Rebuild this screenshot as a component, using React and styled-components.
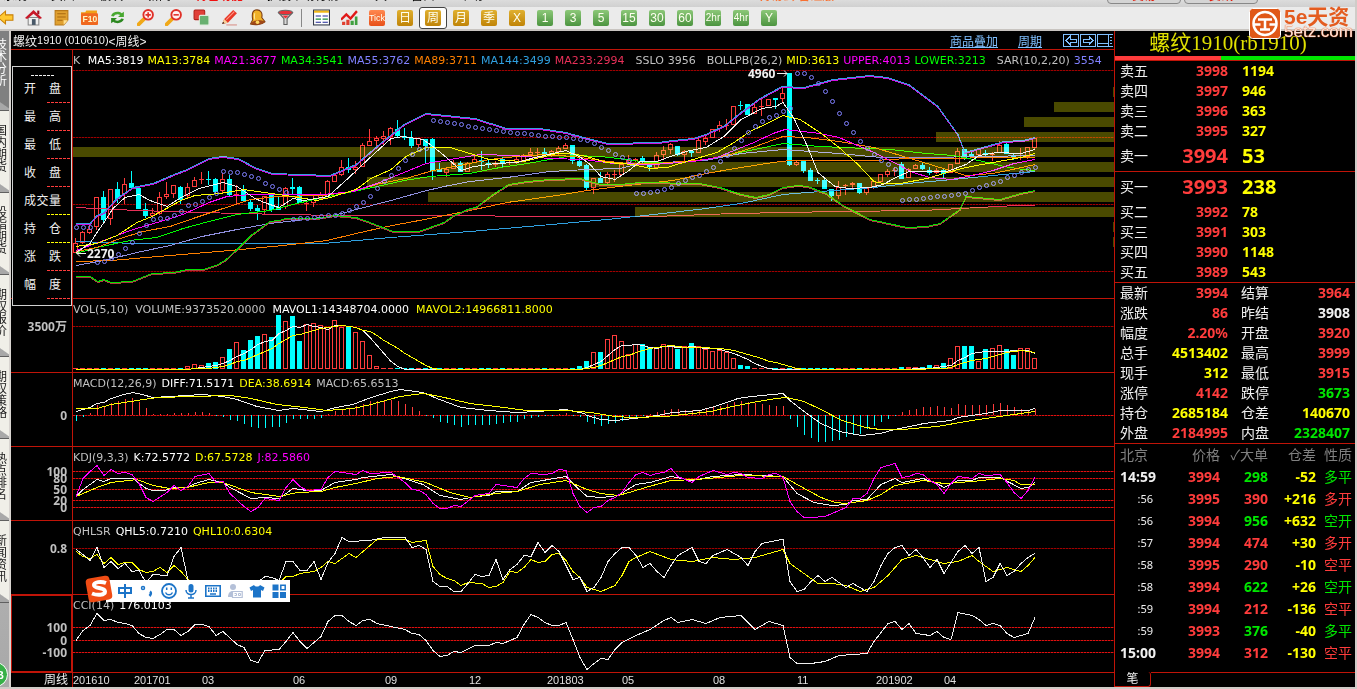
import React from 'react';
import styled, { createGlobalStyle, css } from 'styled-components';

const RED = '#ff3c3c';
const CYAN = '#00ffff';
const YELLOW = '#ffff00';
const GREEN = '#00e600';
const WHITE = '#f0f0f0';
const SILVER = '#c0c0c0';
const LINE = '#c01408';
const VIOLET = '#8080ff';
const MAGENTA = '#ff00ff';
const ORANGE = '#ff8000';
const SKY = '#30a0e0';
const ROSE = '#e83058';

const Global = createGlobalStyle`
  * { box-sizing: border-box; }
  body { margin: 0; background: #000; }
  button { font: inherit; border: 0; padding: 0; background: none; color: inherit; }
`;

/* ---------- page frame ---------- */

const Page = styled.div`
  position: relative;
  min-height: 100vh;
  overflow: hidden;
  background: #000;
  color: ${WHITE};
  font: 12px 'Liberation Sans', 'Noto Sans CJK SC', sans-serif;
  border-right: 2px solid #d0ccc8;
  border-bottom: 2px solid #d0ccc8;
`;

const MenuStrip = styled.nav`
  display: flex;
  justify-content: space-between;
  height: 7px;
  overflow: hidden;
  background: linear-gradient(#dcdcdc, #d0d0d0);
`;

const MenuGroup = styled.div`
  display: flex;
  gap: 24px;
  height: 14px;
  margin: -11px 0 0 3px;
  line-height: 14px;
  white-space: nowrap;
`;

const MenuItem = styled.a`
  color: ${(p) => p.$color || '#000'};
  font-weight: ${(p) => (p.$color ? 700 : 400)};
  text-decoration: none;
`;

const PillGroup = styled.div`
  display: flex;
  gap: 3px;
  margin: -14px 97px 0 0;
`;

const Pill = styled.button`
  width: 74px;
  height: 18px;
  border: 1px solid #888;
  border-radius: 4px;
  background: #d4d4d4;
  color: #e02010;
  font-weight: 700;
  line-height: 18px;
`;

const Toolbar = styled.div`
  display: flex;
  align-items: center;
  height: 24px;
  padding-bottom: 1px;
  background: #ebebeb;
  border-bottom: 2px solid #c8c4c0;
  overflow: hidden;
`;

const ToolRow = styled.div`
  display: flex;
  margin-left: -9px;
`;

const Tool = styled.button`
  flex: none;
  display: flex;
  align-items: center;
  justify-content: center;
  width: 28px;
  height: 22px;
  ${(p) =>
    p.$on &&
    css`
      background: #fff;
      border: 1px solid #444;
      border-radius: 3px;
    `}
`;

const Separator = styled.span`
  width: 1px;
  height: 18px;
  margin: 2px 5px 2px 2px;
  background: #888;
`;

const tileColors = {
  gold: 'linear-gradient(#e0b030, #c08408)',
  green: 'linear-gradient(#8cc878, #4c9440)',
  orange: 'linear-gradient(#ff8850, #e85018)',
};

const Tile = styled.span`
  display: flex;
  align-items: center;
  justify-content: center;
  width: 16px;
  height: 16px;
  border-radius: 2px;
  background: ${(p) => tileColors[p.$tone]};
  color: #fffff0;
  font-family: ${(p) => (p.$size ? "'Liberation Sans Narrow', " : '')}'Liberation Sans', 'Noto Sans CJK SC', sans-serif;
  font-size: ${(p) => p.$size || 12}px;
  line-height: 16px;
`;

const Brand = styled.a`
  position: absolute;
  top: 8px;
  right: 0;
  display: flex;
  width: 106px;
  height: 32px;
  gap: 3px;
  color: #e45c20;
  text-decoration: none;
  z-index: 3;
`;

const BrandText = styled.span`
  display: flex;
  flex-direction: column;
  white-space: nowrap;
`;

const BrandName = styled.strong`
  font-size: 21px;
  line-height: 17px;
`;

const BrandUrl = styled.span`
  color: #f8e4dc;
  font-size: 17px;
  line-height: 14px;
  text-shadow: 0 0 1px #e45c20, 0 0 1px #e45c20;
`;

const Body = styled.div`
  display: flex;
`;

/* ---------- left rail ---------- */

const Rail = styled.nav`
  flex: none;
  display: flex;
  flex-direction: column;
  width: 11px;
  overflow: hidden;
  background: linear-gradient(#d8d8d8, #a8a8a8);
  border-right: 2px solid #d8d4d0;
`;

const RailTab = styled.a`
  display: flex;
  justify-content: flex-end;
  flex: none;
  width: 9px;
  height: ${(p) => (p.$on ? 80 : 82)}px;
  padding: ${(p) => (p.$on ? 8 : 14)}px 2px 0 0;
  background: linear-gradient(35deg, #a8a8a8 6px, ${(p) => (p.$on ? '#808080' : '#f0efe8')} 7px);
  border-bottom: 1px solid #606060;
  color: ${(p) => (p.$on ? '#fff' : '#202020')};
  line-height: 12px;
  text-decoration: none;
`;

const RailText = styled.span`
  flex: none;
  width: 12px;
  overflow-wrap: anywhere;
`;

const RailBadge = styled.span`
  display: flex;
  align-items: center;
  justify-content: flex-end;
  width: 25px;
  height: 25px;
  margin: auto 0 0 -17px;
  padding-right: 3px;
  border-radius: 50%;
  background: #38b048;
  border: 1px solid #fff;
  color: #fff;
  font-weight: 700;
  font-size: 11px;
`;

/* ---------- chart column ---------- */

const Charts = styled.main`
  position: relative;
  flex: 1;
  min-width: 0;
`;

const ChartTitle = styled.header`
  display: flex;
  align-items: center;
  height: 19px;
  padding-left: 2px;
  border-bottom: 1px solid ${LINE};
  font-size: 12px;
`;

const Digits = styled.span`
  font-size: 11px;
`;

const TitleLinks = styled.div`
  display: flex;
  align-items: center;
  gap: 20px;
  margin-left: auto;
`;

const TitleLink = styled.a`
  color: #80c0ff;
  text-decoration: underline;
`;

const PaneRow = styled.section`
  display: flex;
`;

const AxisCell = styled.div`
  flex: none;
  width: 62px;
  border-right: 1px solid ${LINE};
  border-bottom: 1px solid ${LINE};
  ${(p) => p.$focus && css`box-shadow: inset 0 0 0 1px ${LINE};`}
`;

const Pane = styled.div`
  flex: 1;
  min-width: 0;
  display: grid;
  overflow: hidden;
  border-bottom: 1px solid ${LINE};
  > * { grid-area: 1 / 1; }
`;

const Drawing = styled.svg`
  display: block;
  width: 100%;
  height: ${(p) => p.$h}px;
  font: 700 12px 'Noto Sans', 'Noto Sans CJK SC', sans-serif;
`;

const Legend = styled.div`
  display: flex;
  align-items: center;
  gap: ${(p) => p.$gap || 5}px;
  height: 20px;
  font: 11px 'DejaVu Sans', sans-serif;
  white-space: pre;
  z-index: 1;
`;

const Key = styled.span`
  color: ${(p) => p.$color};
`;

const DateRow = styled.footer`
  display: flex;
  height: 14px;
`;

const PeriodName = styled.div`
  flex: none;
  width: 62px;
  padding-right: 4px;
  border-right: 1px solid ${LINE};
  text-align: right;
  line-height: 14px;
`;

/* ---------- floating quote box ---------- */

const QuoteBox = styled.div`
  position: absolute;
  top: 35px;
  left: 1px;
  width: 60px;
  height: 240px;
  border: 1px solid #d0d0d0;
  background: #000;
  text-align: center;
  line-height: 14px;
`;

const Dashes = styled.div`
  width: 23px;
  height: 1px;
  margin: ${(p) => (p.$lead ? '8px auto 6px' : '6px 1px 7px auto')};
  background: repeating-linear-gradient(90deg, ${(p) => p.$color} 0 3px, transparent 3px 4px);
`;

const QuoteName = styled.div`
  display: flex;
  justify-content: space-between;
  height: 14px;
  padding: 0 10px 0 11px;
`;

/* ---------- right panel ---------- */

const Side = styled.aside`
  flex: none;
  display: flex;
  flex-direction: column;
  width: 241px;
  border-left: 1px solid ${LINE};
`;

const Contract = styled.h1`
  display: flex;
  align-items: center;
  justify-content: center;
  height: 25px;
  margin: 0;
  padding-right: 14px;
  color: #e0e000;
  font: 400 21px/25px 'Liberation Serif', 'Noto Sans CJK SC', serif;
`;

const Ratio = styled.div`
  display: flex;
  height: 5px;
  border-bottom: 1px solid ${LINE};
`;

const RatioPart = styled.span`
  flex: ${(p) => p.$part};
  background: ${(p) => p.$color};
`;

const Table = styled.table`
  width: 100%;
  table-layout: fixed;
  border-spacing: 0;
  ${(p) => p.$ruled && css`border-bottom: 1px solid ${LINE};`}
`;

const Row = styled.tr`
  height: ${(p) => p.$h || 20}px;
`;

const Cell = styled.td`
  width: ${(p) => (p.$w ? p.$w + 'px' : 'auto')};
  padding: 0 ${(p) => p.$pr || 0}px 0 ${(p) => p.$pl || 0}px;
  color: ${(p) => p.$color || WHITE};
  text-align: ${(p) => p.$align || 'left'};
  font: ${(p) => (p.$num ? 700 : 400)} ${(p) => p.$size || 14}px/18px 'Noto Sans', 'Noto Sans CJK SC', sans-serif;
  white-space: nowrap;
`;

const SideTabs = styled.div`
  display: flex;
  margin-top: 8px;
`;

const SideTab = styled.button`
  width: 36px;
  height: 15px;
  border-right: 1px solid ${LINE};
  border-bottom: 1px solid ${LINE};
  border-radius: 0 3px 3px 0;
  line-height: 14px;
`;

const SideRule = styled.span`
  flex: 1;
  border-top: 1px solid ${LINE};
`;

/* ---------- input method bar ---------- */

const ImeBar = styled.div`
  position: absolute;
  left: 85px;
  top: 575px;
  display: flex;
  align-items: center;
  z-index: 3;
`;

const ImeLogo = styled.svg`
  position: relative;
  z-index: 1;
`;

const ImeTools = styled.div`
  display: flex;
  align-items: center;
  gap: 4px;
  height: 22px;
  margin: 4px 0 0 -8px;
  padding: 0 2px 0 10px;
  background: #fff;
  color: #1c74c8;
`;

const ImeTool = styled.button`
  display: flex;
  align-items: center;
  justify-content: center;
  width: 18px;
  height: 18px;
`;

/* ---------- chart data ---------- */

const parse = (s) => s.trim().split(/\s+/).map((p) => p.split(',').map(Number));
const xOf = (bar) => 3 + Math.round(bar * 7);

const valueAt = (pts, i) => {
  for (let k = 1; k < pts.length; k++) {
    const [x0, y0] = pts[k - 1];
    const [x1, y1] = pts[k];
    if (i <= x1) return y0 + ((y1 - y0) * (i - x0)) / (x1 - x0);
  }
  return pts[pts.length - 1][1];
};

const MA5 = parse('0,202 2,193 3,182 4,172 5.3,158 7,147 9,144 10.5,150 13,156 15,147 17.5,138 21,132 23,136 25.5,148 27.3,153 29,157 31,148 32.5,150 36,146 39,127 41.7,109 45,88 46.7,86 49.6,89 51,96 52.5,105 55,120 56.8,116 60,113 63,112 65.6,107 70,100 72.2,107 73.4,114 75,126 77,129 79,120 80.6,111 83,111 85.3,105 87.7,100 90,97 92.5,86 95,69 98,58 100,56 101,52 102.6,68 104.4,95 106,122 108.4,136 110.6,138 113.4,137 115.3,134 117.2,127 119,121 124.4,121 127.2,114 129,105 131.5,102 135,103 137,99');
const MA13 = parse('0,196 3,193 5.8,185 8.7,172 10.8,166 15,150 17,145 20.6,143 24,139 26.8,142 30,145 34.4,150 36.3,147 40,139 42.2,128 45,119 47.2,106 50,97 53.4,97 56.3,103 59,109 64,111 68.7,103 71,103 73.4,107 75.8,112 79.6,114 82,118 84.4,117 88.2,109 91.5,102 94,92 96.3,81 98.7,73 101,65 103.4,69 106.3,82 109,97 111.5,113 114,131 115.3,133 117.7,133 121.5,128 124.4,122 127.2,117 131,112 135,107 137,103');
const MA21 = parse('0,200 4,190 7.7,180 11.5,172 15.3,164 19,152 21.5,146 25,144 35.3,144 39.6,141 43,133 46.8,122 50,113 53.4,109 57.7,104 62.5,105 67.7,108 72.5,109 76.8,113 82.5,114 88.2,111 91.5,107 94,100 96.8,92 99.6,83 101.3,79 106.3,83 109,87 114,102 116.8,112 119.6,122 122,127 125,129 128.2,125 131,120 134,113 137,109');
const MA34 = parse('0,203 3,197 7.7,190 11.5,187 15.3,178 19,171 23,164 27.7,160 31.5,153 35.3,147 39,142 43,136 46.8,130 50.6,126 56.3,123 60.6,117 64.4,113 67.7,109 71,105 75,106 78.7,109 81.5,112 85.3,112 90,109 94,103 97.7,98 101,93 106.3,96 116.3,99 121.5,103 125.3,105 129,110 132.5,116 135.3,119 137,120');
const MID = parse('0,201 3,197 6.3,188 9.6,181 13.4,176 17.2,167 20.6,159 25,149 28.7,146 35.3,145 39.6,141 43.4,133 47.2,128 51,120 56.3,113 59,109 63,106 67,104 71,106 75,110 78.7,113 83,113 90,109 93.4,104 96.3,98 99,91 101,86 104.4,87 109,91 114,97 118.7,107 121.5,113 125.3,121 127.2,125 131,123 134.4,118 137,114');
const MA89 = parse('0,211 5,210 13.4,205 22,200 29.6,195 35.8,190 40,183 44.4,176 50.6,168 56.3,160 61.5,152 68.7,145 73,140 78.7,135 85.3,130 90,123 95,117 99.6,112 102,110 114,110 118.7,108 137,107');
const MA55 = parse('0,215 4,210 8.7,202 13.4,195 18,186 23,179 27.7,173 32.5,169 36.3,166 40,159 45,150 49.6,141 52.5,136 56.3,131 61.5,127 67.7,121 73,119 77.7,118 80.6,113 90,110 95,103 101,99 109,103 115,107 121.5,107 137,105');
const MA144 = parse('0,191 8.7,193 35.3,193 45,187 56.3,181 66.3,175 75.8,169 82.5,164 90,158 95,153 101,144 106.3,141 114,137 118.7,133 125.3,129 131,125 137,121');
const MA233 = parse('0,157 8.7,160 23,163 37,165 82.5,166 94,163 109,161 121,160 129,157 134.4,155 137,155');
const UPPER = parse('0,173 2,173 3,165 4,162 5.8,148 8.2,137 11,133 14,124 15.8,119 19,108 21,106 23.2,108 25.8,118 28.2,123 36.3,125 40,114 43,96 46.8,74 50,63 57,68 61.5,78 66.3,78 70,82 72.5,87 76,93 83.2,92 85.3,90 88.2,88 90,84 92.7,75 95,62 97.7,48 100.8,36 104,37 108.2,29 113.4,25 115.8,27 119,34 123.2,56 126,84 127,102 129,98 132.5,91 135.3,90 137,87');
const LOWER = parse('0,226 2,226 3.2,231 4,229 5,232 8,231 10.8,223 14,222 15.8,219 18.2,219 20,215 21.3,210 23,199 25,185 27.7,171 29,170 30,168 34.4,168 37,165 40,167 42,172 45.3,181 49,181 52.5,172 54,165 56.3,158 57.2,157 59.6,144 61.8,134 64.4,131 67.7,129 72,128 75,134 77.7,134 80.6,132 89,133 92,137 95,144 97.2,147 99,144 101,137 103.2,135 104.6,136 107.2,143 109.6,155 113.4,169 118.7,177 121.5,176 123.4,173 126.3,159 127.2,146 132,149 135,143 137,140');

const SAR = [177, 177, 177, 212, 211, 208, 204, 198, 192, 183, 175, 169, 168, 168, 165, 161, 155, 154, 151, 147, 143, 121, 122, 122, 124, 126, 128, 133, 136, 139, 142, 169, 168, 168, 167, 166, 165, 165, 163, 160, 156, 152, 146, 138, 131, 125, 118, 110, 104, 99, 98, 70, 71, 72, 73, 74, 76, 77, 78, 79, 80, 81, 82, 83, 83, 84, 85, 86, 86, 87, 87, 88, 89, 90, 93, 97, 100, 104, 107, 110, 143, 143, 142, 141, 139, 137, 133, 130, 127, 125, 121, 117, 111, 105, 98, 90, 82, 76, 71, 67, 65, 61, 58, 23, 23, 27, 33, 41, 51, 63, 73, 82, 91, 98, 104, 110, 114, 119, 150, 149, 149, 148, 147, 146, 146, 145, 144, 143, 140, 137, 135, 133, 131, 127, 125, 122, 119, 117];

/* one entry per week: direction, then high, body top, body bottom, low */
const CANDLES = `
u188,193,203,203 u181,182,193,194 u175,179,183,184 u147,147,177,180 d141,147,170,172 u139,139,169,175 d132,139,149,153 u128,134,144,154 d121,133,138,139 d138,138,159,159
d153,159,166,168 u158,163,166,168 u142,147,164,165 u132,144,147,149 u135,135,144,148 d136,137,150,154 u133,137,146,149 u127,130,137,137 u122,129,130,134 d121,129,130,135
d128,129,142,143 u123,129,141,143 d125,129,145,147 u135,144,146,154 d135,140,151,152 d150,152,159,161 d155,158,161,170 u146,146,160,164 d143,143,160,162 d147,157,160,160
u137,138,157,159 d128,137,139,144 d136,137,153,153 u151,153,154,161 u146,149,153,157 u142,145,149,149 u130,131,147,147 u123,125,132,132 u110,117,125,126 d108,117,120,123
u111,117,120,124 u93,95,117,117 u79,91,96,96 u86,88,91,98 u81,86,89,96 u77,78,87,95 d70,79,86,88 d78,86,88,90 d81,88,96,98 u88,88,95,97
d89,89,96,113 d88,89,121,130 d113,119,122,122 u118,119,123,127 u110,113,119,119 d111,113,122,122 u112,113,122,122 u106,109,113,113 d101,110,112,120 d110,113,115,118
u111,113,115,117 d107,109,114,117 u110,112,113,115 u107,109,112,114 u104,105,112,112 u98,102,105,106 u98,102,103,106 d98,102,104,105 u100,101,104,107 u96,98,102,106
u93,95,99,99 d95,95,111,114 d108,111,116,117 d114,115,138,140 u128,128,138,144 d122,128,133,133 u122,124,133,134 u120,124,125,132 u114,114,125,125 u105,110,113,113
u108,109,111,112 d106,108,111,115 d111,112,117,121 u102,105,118,118 u96,100,105,109 u93,94,100,104 d96,96,105,106 u100,101,105,111 d100,101,103,107 u88,90,103,103
u86,88,92,95 u79,79,88,88 u71,75,79,82 u69,75,76,80 u56,56,75,75 d51,55,56,60 d54,54,65,65 u54,57,64,64 u47,56,57,66 u49,49,56,56
d48,48,50,59 u37,43,49,52 d23,23,115,116 u110,112,115,116 d111,111,121,123 d118,120,131,131 d128,130,131,134 d127,130,139,139 d139,139,146,151 u131,137,146,149
u134,135,136,145 u132,133,135,140 d133,133,143,144 u137,138,143,145 u130,131,138,139 u124,124,132,132 u119,121,125,127 u117,120,121,126 d112,114,129,129 u118,119,128,128
u114,115,119,119 d112,115,119,120 d117,120,123,125 u118,120,123,124 d119,120,124,128 u114,114,123,123 u98,101,114,114 d99,99,109,110 d101,104,106,107 u98,99,105,107
d100,103,105,107 u102,104,105,111 u91,95,103,103 d92,94,104,104 d104,105,107,110 u98,107,108,110 u97,97,107,109 u87,88,98,99`
  .trim()
  .split(/\s+/)
  .map((s) => ({ up: s[0] === 'u', v: s.slice(1).split(',').map(Number) }));

const VOLUME = [
  ...Array(16).fill(1), 3, 5, 4, 6, 7, 12, 20, 27, 19, 29, 33, 35, 32, 54, 48, 53, 28, 45, 46, 44, 42, 49, 42, 43, 37, 28, 14, 3,
  ...Array(28).fill(1), 3, 8, 17, 17, 30, 34, 28, 15, 25, 25, 22, 22, 25, 24, 20, 23, 26, 23, 20, 18, 19, 17, 11, 4, 3,
  ...Array(21).fill(1), 2, 2, 2, 2, 4, 4, 6, 11, 23, 23, 23, 8, 20, 21, 24, 20, 14, 21, 21, 11,
];

const average = (n) =>
  VOLUME.map((_, i) => {
    const part = VOLUME.slice(Math.max(0, i - n + 1), i + 1);
    return [i, 71 - part.reduce((a, b) => a + b, 0) / part.length];
  });

const DIFF = parse('0,38 2,34 3,30 4,29 5,25 6.8,21 8.2,19 9.4,21 11,24 18.2,21 21,23 23,26 25.8,33 29,37 31,35 35,38 37.2,34 39.6,31 42.2,24 45,18 46.3,16 49.6,19 51.5,25 55,34 59,37 63,39 65.8,38 70,36 72.5,40 73,42 75,46 77,47 81,44 83,42 85.3,39 89.2,37 91.7,32 94.6,25 96.6,23 101,20 102,27 104,38 106.4,50 109,58 112.3,62 114.8,60 117,56 121.2,50 125,47 126,44 130,40 132,37 136,37 137,35');
const DEA = parse('0,35 3,35 5,31 8.7,27 11.5,24 22,22 25,25 28.7,31 32.5,34 35.8,37 39.6,35 42.2,31 46.3,23 49.6,20 52,23 56.3,30 60,33 64.4,37 70,37 73.5,39 77,43 79.4,44 84.3,43 86.8,41 90.7,38 93.2,34 96.6,29 100,25 101.5,24 104,28 106.4,36 109.4,47 112.8,54 114.8,56 118,56 123,53 128,47 131,44 134,41 137,38');
const K_LINE = parse('0,49 1,42 3,32 4,34 5,31 8.2,31 10,41 11,43 12.5,43 14,40 15.8,40 17,36 19,32 21,35 22,40 25,51 27,50 29,51 31,41 33,43 35,43 37,35 40,32 41,30 45,27 46.8,31 49.6,37 52,48 55,52 57,49 59,48 60,44 63,44 65,35 70,29 71.5,40 73,49 75.2,50 77.4,48 80,37 82,35 85,29 88,33 91,29 95,27 101,29 103,46 105.4,55 108,58 110,57 111,53 113,52 115,37 117,31 118,35 121,31 123,36 124,40 126,33 128,33 129,30 132,30 135,41 136,40 137,35');
const D_LINE = parse('0,49 3,40 5,35 8.7,32 11,38 13.4,41 15.8,40 19,35 21,35 25,45 29,49 31.5,45 35,44 37,40 40,36 43,31 46,29 50,35 53.4,45 56.3,50 60,46 63,44 66.3,37 70,33 73,42 75,46 77.4,48 79,45 81.8,39 85,33 88.7,32 91.7,30 95,28 101,29 103,37 106.4,50 108.4,55 110,56 113,53 115,47 117,38 121,33 124,36 128,34 132,31 134,33 135,37 137,37');
const J_LINE = parse('0,49 1,31 2,24 3,18 4,28 5,22 6,26 7,25 8,27 9,36 10,50 11,54 13,45 14,38 15,43 16,39 17,29 19,26 20,35 21,34 22,46 24,59 25,64 26,60 27,51 29,53 30,40 31,32 32,39 33,43 35,42 36,30 37,24 40,27 41,23 42,26 45,25 47,35 48,42 49,43 50,47 51,56 52,61 53,61 54,58 55,59 57,48 59,46 60,37 63,40 64,31 65,26 67,27 68,26 69,22 70,23 71,46 72,59 73,65 74,60 75,59 76,53 77,50 78,45 79,35 80,27 81,25 82,28 83,26 84,25 85,21 86,29 87,32 88,35 89,29 91,23 93,27 94,25 95,26 96,30 98,31 99,27 100,26 101,30 102,54 103,64 104,70 105,70 107,69 108,66 110,60 111,51 112,51 113,46 114,31 115,20 117,16 118,30 119,29 120,26 121,27 122,33 123,37 124,46 125,36 126,29 128,31 129,26 130,28 132,27 133,35 134,45 135,51 136,43 137,30');
const QHL5 = parse('0,28 1,33 2,39 3,26 4,46 5,40 6,47 7,42 8,50 9,49 10,61 11,53 13,54 14,35 15,26 16,59 18,66 25,66 27,55 28,56 29,59 30,40 31,40 32,49 33,49 34,40 35,58 36,41 37,32 38,16 39,20 42,19 44,16 47,16 48,26 49,24 50,28 51,60 52,65 53,65 54,70 55,70 56,62 57,53 58,55 59,54 60,38 61,58 62,48 63,43 64,34 65,35 66,21 67,31 68,24 69,30 71,58 72,56 73,70 74,66 75,56 76,40 77,32 78,26 79,26 80,34 81,46 82,42 83,50 84,56 85,44 86,34 88,26 89,40 90,42 91,34 93,28 95,36 96,44 97,30 98,22 100,19 101,18 102,60 103,70 104,68 105,60 106,54 107,60 108,56 110,66 111,62 113,70 114,60 115,44 116,32 117,26 118,24 119,34 120,28 121,36 122,46 123,38 124,52 126,30 127,24 128,32 129,26 130,60 131,56 132,42 133,54 134,50 135,42 136,36 137,32');
const QHL10 = parse('0,30 1,35 2,37 3,33 4,42 5,36 6,43 7,41 8,41 9,48 10,51 11,50 12,46 13,51 14,44 15,50 16,58 18,64 28,66 29,62 30,55 31,55 32,52 34,50 35,46 36,40 37,42 39,32 40,36 42,24 43,18 47,18 48,21 50,19 51,45 52,53 53,57 54,59 55,64 56,61 58,62 59,66 60,65 61,61 62,50 63,51 64,46 65,38 66,41 67,40 68,33 69,32 70,39 71,50 72,56 73,66 75,70 77,64 78,54 79,40 80,36 82,30 85,38 88,40 91,36 94,38 97,36 99,32 101,28 102,42 104,52 106,62 108,62 110,64 112,70 114,66 116,54 118,38 120,34 122,38 124,42 126,40 128,34 129,40 131,50 133,46 135,50 136,44 137,36');
const CCI = parse('0,45 1,35 2,30 3,18 4,25 5,24 6,27 7,28 8,30 9,38 10,42 11,43 12,39 13,34 14,34 15,40 16,36 17,29 18,29 19,31 20,40 21,36 23,49 24,52 25,65 26,67 27,55 29,54 30,46 31,37 32,46 33,53 35,41 36,26 37,20 38,20 39,26 40,30 41,25 42,24 43,28 45,31 47,34 48,38 49,39 50,45 51,55 52,61 53,60 54,56 55,57 57,50 59,50 60,47 61,48 63,42 64,29 65,19 66,22 67,27 68,30 69,30 70,27 71,44 72,62 73,74 74,68 75,63 76,64 77,54 78,47 80,40 82,34 84,25 85,22 86,27 88,24 90,28 92,22 95,20 97,34 99,26 101,30 102,62 103,68 105,68 107,66 109,60 111,59 113,58 114,46 116,28 117,26 118,34 119,28 120,38 122,40 123,36 124,42 125,44 126,17 128,20 129,24 130,30 131,28 132,30 133,38 134,42 136,38 137,22');

/* volume profile: top edge, length measured from the right edge */
const PROFILE = [[37, 1], [52, 60], [67, 90], [82, 178], [97, 1041], [112, 684], [127, 747], [142, 686], [157, 479], [172, 1], [187, 1]];

const DATES = [[0, '201610'], [61, '201701'], [129, '03'], [220, '06'], [312, '09'], [396, '12'], [474, '201803'], [549, '05'], [640, '08'], [724, '11'], [803, '201902'], [871, '04']];

/* ---------- chart pieces ---------- */

const Trace = ({ pts, color, dy = 0 }) => (
  <polyline
    points={pts.map(([i, y]) => `${xOf(i)},${Math.round(y + dy) + 0.5}`).join(' ')}
    fill="none"
    stroke={color}
    shapeRendering="crispEdges"
  />
);

const Grid = ({ ys, bright }) => {
  const id = bright ? 'dots-bright' : 'dots-dark';
  return (
    <g shapeRendering="crispEdges">
      <pattern id={id} width="3" height="1" patternUnits="userSpaceOnUse">
        <rect width="3" height="1" fill={bright ? '#600404' : '#400000'} />
        <rect width="2" height="1" fill={bright ? '#e01010' : '#a00000'} />
      </pattern>
      {ys.map((y) => <rect key={y} y={y} width="100%" height="1" fill={`url(#${id})`} />)}
    </g>
  );
};

const AxisTicks = ({ h, ticks = [] }) => (
  <Drawing $h={h} fill={SILVER} textAnchor="end">
    {ticks.map(([y, t]) => (
      <text key={t} x="56" y={y + 5}>{t}</text>
    ))}
  </Drawing>
);

const Block = ({ x, y, h, up }) =>
  up && h > 1 ? (
    <rect x={x - 1.5} y={y + 0.5} width="4" height={h - 1} fill="#000" stroke={RED} />
  ) : (
    <rect x={x - 2} y={y} width="5" height={Math.max(1, h)} fill={up ? RED : CYAN} />
  );

const Candles = () => (
  <g shapeRendering="crispEdges">
    {CANDLES.map(({ up, v: [hi, top, bot, lo] }, i) => {
      const x = xOf(i) - 1;
      return (
        <g key={i}>
          <rect x={x} y={hi} width="1" height={Math.max(1, lo - hi)} fill={up ? RED : CYAN} />
          <Block x={x} y={top} h={bot - top} up={up} />
        </g>
      );
    })}
  </g>
);

const ChartPane = ({ h, keys, gap, ticks, focus, children }) => (
  <PaneRow>
    <AxisCell $focus={focus}><AxisTicks h={h} ticks={ticks} /></AxisCell>
    <Pane>
      <Drawing $h={h}>{children}</Drawing>
      <Legend $gap={gap}>
        {keys.map(([t, c]) => <Key key={t} $color={c}>{t}</Key>)}
      </Legend>
    </Pane>
  </PaneRow>
);

const PricePane = () => (
  <ChartPane
    h={248}
    gap={4}
    keys={[['K ', SILVER], ['MA5:3819', '#fff'], ['MA13:3784', YELLOW], ['MA21:3677', MAGENTA], ['MA34:3541', '#00ff00'], ['MA55:3762', VIOLET], ['MA89:3711', ORANGE], ['MA144:3499', SKY], ['MA233:2994', ROSE], ['  SSLO', SILVER], ['3956', SILVER], ['  BOLLPB(26,2)', SILVER], ['MID:3613', YELLOW], ['UPPER:4013', MAGENTA], ['LOWER:3213', '#00ff00'], ['  SAR(10,2,20)', SILVER], ['3554', VIOLET]]}
  >
    <Grid ys={[20, 87, 154, 221]} />
    <Candles />
    <Trace pts={MA233} color={ROSE} />
    <Trace pts={MA144} color={SKY} />
    <Trace pts={MA55} color="#9090e0" />
    <Trace pts={MA89} color={ORANGE} />
    <Trace pts={MA34} color="#00ff00" />
    <Trace pts={MID} color={ORANGE} />
    <Trace pts={MA21} color={MAGENTA} />
    <Trace pts={MA13} color={YELLOW} />
    <Trace pts={MA5} color={WHITE} />
    <Trace pts={UPPER} color="#d010e0" dy={1} />
    <Trace pts={UPPER} color={SKY} />
    <Trace pts={LOWER} color="#b03840" dy={1} />
    <Trace pts={LOWER} color="#00e000" />
    <g fill="none" stroke={VIOLET}>
      {SAR.map((y, i) => <circle key={i} cx={xOf(i) + 0.5} cy={y + 0.5} r="2" />)}
    </g>
    <svg x="100%" overflow="visible" shapeRendering="crispEdges">
      {PROFILE.map(([y, len]) => (
        <rect key={y} x={-len} y={y} width={len} height="10" fill="#4a4a00" style={{ mixBlendMode: 'screen' }} />
      ))}
    </svg>
    <g fill={WHITE} stroke="none">
      <text x="675" y="28">4960</text>
      <text x="14" y="208">2270</text>
    </g>
    <path d="M704 23.5h10m-3-3l3 3l-3 3M13 203.5H4m3-3l-3 3l3 3" fill="none" stroke={WHITE} />
  </ChartPane>
);

const VolumePane = () => (
  <ChartPane h={73} gap={7} ticks={[[27, '3500万']]} keys={[['VOL(5,10)', SILVER], ['VOLUME:9373520.0000', SILVER], ['MAVOL1:14348704.0000', '#fff'], ['MAVOL2:14966811.8000', YELLOW]]}>
    <Grid ys={[27]} />
    <g shapeRendering="crispEdges">
      {VOLUME.map((v, i) => <Block key={i} x={xOf(i) - 1} y={70 - v} h={v} up={CANDLES[i].up} />)}
    </g>
    <Trace pts={average(5)} color={WHITE} />
    <Trace pts={average(10)} color={YELLOW} />
  </ChartPane>
);

const MacdPane = () => (
  <ChartPane h={73} ticks={[[42, '0']]} keys={[['MACD(12,26,9)', SILVER], ['DIFF:71.5171', '#fff'], ['DEA:38.6914', YELLOW], ['MACD:65.6513', SILVER]]}>
    <Grid ys={[42]} bright />
    <g shapeRendering="crispEdges">
      {VOLUME.map((_, i) => {
        const d = Math.round(2 * (valueAt(DEA, i) - valueAt(DIFF, i)));
        return <rect key={i} x={xOf(i)} y={d > 0 ? 42 - d : 42} width="1" height={Math.max(1, Math.abs(d))} fill={d > 0 ? RED : CYAN} />;
      })}
    </g>
    <Trace pts={DIFF} color={WHITE} />
    <Trace pts={DEA} color={YELLOW} />
  </ChartPane>
);

const KdjPane = () => (
  <ChartPane h={73} ticks={[[24, '100'], [31, '80'], [42, '50'], [53, '20'], [60, '0']]} keys={[['KDJ(9,3,3)', SILVER], ['K:72.5772', '#fff'], ['D:67.5728', YELLOW], ['J:82.5860', MAGENTA]]}>
    <Grid ys={[24, 31, 42, 53, 60]} bright />
    <Trace pts={K_LINE} color={WHITE} />
    <Trace pts={D_LINE} color={YELLOW} />
    <Trace pts={J_LINE} color={MAGENTA} />
  </ChartPane>
);

const QhlPane = () => (
  <ChartPane h={73} ticks={[[27, '0.8']]} keys={[['QHLSR', SILVER], ['QHL5:0.7210', '#fff'], ['QHL10:0.6304', YELLOW]]}>
    <Grid ys={[27]} />
    <Trace pts={QHL10} color={YELLOW} />
    <Trace pts={QHL5} color={WHITE} />
  </ChartPane>
);

const CciPane = () => (
  <ChartPane h={77} focus ticks={[[32, '100'], [45, '0'], [57, '-100']]} keys={[['CCI(14)', SILVER], ['176.0103', '#fff']]}>
    <Grid ys={[32, 45, 57]} bright />
    <Trace pts={CCI} color={WHITE} />
  </ChartPane>
);

/* ---------- toolbar icons ---------- */

const Ico = ({ children, w = 17 }) => <svg width={w} height="17" viewBox="0 0 16 16">{children}</svg>;

const icons = {
  返回: <Ico><path d="M1 8L8 2v3.500h7v5H8V14z" fill="#ffc830" stroke="#c88008" /></Ico>,
  首页: <Ico><path d="M3 8h10v7H3z" fill="#f0f0f0" stroke="#888" /><path d="M0 8.500L8 1l8 7.500l-2 1L8 4.500l-6 5z" fill="#c81828" /><path d="M11.500 1.500h2V5h-2z" fill="#a01020" /><path d="M6.500 9.500h3.500V15H6.500z" fill="#485868" /></Ico>,
  记事: <Ico><path d="M2 1.500h12v9L10 15H2z" fill="#e0a030" stroke="#b87818" /><path d="M4 4.500h8M4 7.500h8M4 10.500h5" stroke="#a86810" /><path d="M14 10.500h-4V15z" fill="#ffe090" /></Ico>,
  F10: <Ico><path d="M0 3h4l1-1.500h10V5H0z" fill="#f0a018" /><rect y="4" width="16" height="11" rx="1" fill="#f06820" /><text x="1.500" y="12.500" fontSize="8" fontWeight="700" fill="#fff4c0">F10</text></Ico>,
  刷新: <Ico><path d="M2 6.500C3 2.500 9 1.500 12 4l2-1.500v5H8.500l2-1.800C8.500 4.500 5.500 5 4.500 7z" fill="#48a830" /><path d="M14 9.500c-1 4-7 5-10 2.500l-2 1.500v-5h5.500l-2 1.800c2 1.200 5 .7 6-1.300z" fill="#2c8820" /></Ico>,
  放大: <Ico><path d="M7 9l-5.500 5.500" stroke="#f0a818" strokeWidth="3.500" strokeLinecap="round" /><circle cx="10.500" cy="5.500" r="4.500" fill="#fff0f0" stroke="#e03028" strokeWidth="1.800" /><path d="M8 5.500h5M10.500 3v5" stroke="#e03028" strokeWidth="1.500" /></Ico>,
  缩小: <Ico><path d="M7 9l-5.500 5.500" stroke="#f0a818" strokeWidth="3.500" strokeLinecap="round" /><circle cx="10.500" cy="5.500" r="4.500" fill="#fff0f0" stroke="#e03028" strokeWidth="1.800" /><path d="M8 5.500h5" stroke="#e03028" strokeWidth="1.500" /></Ico>,
  叠加: <Ico><rect x="1" y="1" width="10" height="9" rx="1" fill="#e04038" stroke="#b02018" /><rect x="6" y="6" width="9" height="9" rx="1" fill="#68b070" stroke="#dcecdc" /></Ico>,
  画线: <Ico><path d="M1 14l2-4.500l8.500-8.500l3.500 3l-8.500 9z" fill="#e83828" /><path d="M1 14l2-4.500l3.500 3.500z" fill="#f8d098" /><path d="M1 14l1-2l1.300 1.300z" fill="#302018" /><path d="M5 15h10" stroke="#d89088" /><path d="M5 10l7.500-7.500" stroke="#ff9888" /></Ico>,
  预警: <Ico><path d="M6 1c5-1 7 3 6 7l3 4c-3 2.500-9 3.500-13.500 2L3.500 10C2.500 5 3 2 6 1z" fill="#f0b028" stroke="#7c3c10" /><path d="M1.500 14c2-3.500 9-4.500 13.500-2c-2 3-9 3.500-13.500 2z" fill="#a04818" /><circle cx="8" cy="12.500" r="1.700" fill="#ffd860" /><path d="M5.500 4c-.8 2-.5 4 0 6" fill="none" stroke="#ffe8a0" /></Ico>,
  筛选: <Ico><path d="M1.500 3.500L6.500 9v5.500h3V9l5-5.500z" fill="#d8d8d8" stroke="#606060" /><ellipse cx="8" cy="3.200" rx="6.500" ry="2" fill="#e83038" stroke="#686868" /><path d="M5 6h6L8 9z" fill="#e83038" /></Ico>,
  报表: <Ico><rect x=".5" y="1" width="15" height="14" fill="#fff" stroke="#303848" /><path d="M1 2.500h14" stroke="#f0b818" strokeWidth="2" /><path d="M2.500 6.500h5M9 6.500h5M2.500 12.500h5M9 12.500h5" stroke="#202898" /><path d="M2.500 9.500h5M9 9.500h5" stroke="#189038" /></Ico>,
  走势: <Ico><path d="M1 15v-3h3v3zM5 15v-5h3v5z" fill="#e04030" /><path d="M9 15v-4h3v4zM13 15V7h2.500v8z" fill="#40a040" /><path d="M0 10l5-5l4 4l6-7" fill="none" stroke="#e01818" strokeWidth="2.200" /></Ico>,
};

const tiles = [['Tick', 'orange', 9], ['日', 'gold'], ['周', 'gold'], ['月', 'gold'], ['季', 'gold'], ['X', 'gold'], ['1', 'green'], ['3', 'green'], ['5', 'green'], ['15', 'green'], ['30', 'green'], ['60', 'green'], ['2hr', 'green', 10], ['4hr', 'green', 10], ['Y', 'green']];

const BrandMark = () => (
  <svg width="32" height="31" viewBox="0 0 32 31">
    <rect x=".5" y=".5" width="31" height="30" rx="3" fill="#e05818" stroke="#fff" />
    <circle cx="16" cy="15.500" r="11.500" fill="none" stroke="#fff" strokeWidth="2.500" />
    <path d="M9 11.500h14M16 11.500v11M5 16.500h6.500M20.500 16.500H27M11 21.500h10" stroke="#fff" strokeWidth="2.500" fill="none" />
  </svg>
);

/* ---------- quotes ---------- */

const asks = [['卖五', 3998, 1194], ['卖四', 3997, 946], ['卖三', 3996, 363], ['卖二', 3995, 327], ['卖一', 3994, 53]];
const bids = [['买一', 3993, 238], ['买二', 3992, 78], ['买三', 3991, 303], ['买四', 3990, 1148], ['买五', 3989, 543]];
const stats = [
  ['最新', '3994', RED, '结算', '3964', RED],
  ['涨跌', '86', RED, '昨结', '3908', WHITE],
  ['幅度', '2.20%', RED, '开盘', '3920', RED],
  ['总手', '4513402', YELLOW, '最高', '3999', RED],
  ['现手', '312', YELLOW, '最低', '3915', RED],
  ['涨停', '4142', RED, '跌停', '3673', GREEN],
  ['持仓', '2685184', YELLOW, '仓差', '140670', YELLOW],
  ['外盘', '2184995', RED, '内盘', '2328407', GREEN],
];
const deals = [
  ['14:59', 3994, 298, '-52', '多平', GREEN],
  [':56', 3995, 390, '+216', '多开', RED],
  [':56', 3994, 956, '+632', '空开', GREEN],
  [':57', 3994, 474, '+30', '多开', RED],
  [':58', 3995, 290, '-10', '空平', RED],
  [':58', 3994, 622, '+26', '空开', GREEN],
  [':59', 3994, 212, '-136', '空平', RED],
  [':59', 3993, 376, '-40', '多平', GREEN],
  ['15:00', 3994, 312, '-130', '空平', RED],
];

const Book = ({ rows }) => (
  <Table $ruled>
    <tbody>
      {rows.map(([name, price, lots]) => {
        const best = name.endsWith('一');
        const size = best ? 20 : 14;
        return (
          <Row key={name} $h={best ? 30 : 20}>
            <Cell $w={45} $pl={5}>{name}</Cell>
            <Cell $w={68} $align="right" $num $size={size} $color={RED}>{price}</Cell>
            <Cell $pl={14} $num $size={size} $color={YELLOW}>{lots}</Cell>
          </Row>
        );
      })}
    </tbody>
  </Table>
);

const Deals = () => (
  <Table>
    <thead>
      <Row $h={22}>
        <Cell as="th" $w={45} $pl={5} $color="#808080">北京</Cell>
        <Cell as="th" $w={60} $align="right" $color="#808080">价格</Cell>
        <Cell as="th" $w={48} $align="right" $color="#808080">✓大单</Cell>
        <Cell as="th" $w={48} $align="right" $color="#808080">仓差</Cell>
        <Cell as="th" $pl={8} $color="#808080">性质</Cell>
      </Row>
    </thead>
    <tbody>
      {deals.map(([time, price, lots, diff, kind, color], i) => {
        const full = time.length === 5;
        return (
          <Row key={i} $h={22}>
            <Cell $pl={full ? 5 : 0} $pr={full ? 0 : 7} $num={full} $size={full ? 14 : 11} $align={full ? 'left' : 'right'}>{time}</Cell>
            <Cell $num $align="right" $color={RED}>{price}</Cell>
            <Cell $num $align="right" $color={color}>{lots}</Cell>
            <Cell $num $align="right" $color={YELLOW}>{diff}</Cell>
            <Cell $pl={8} $color={color}>{kind}</Cell>
          </Row>
        );
      })}
    </tbody>
  </Table>
);

const quoteNames = [['开盘', RED], ['最高', RED], ['最低', RED], ['收盘', RED], ['成交量', YELLOW], ['持仓', YELLOW], ['涨跌', RED], ['幅度', RED]];
const railTabs = ['技术分析', '国内期货', '股指期货', '期权报价', '期权策略', '热点排名', '新闻资讯'];

const ImeIcon = ({ children }) => <svg width="16" height="16" viewBox="0 0 16 16" fill="none" stroke="#1c74c8" strokeWidth="2">{children}</svg>;

const imeIcons = {
  中文: <ImeIcon><path d="M2 5h12v5H2zM8 1v14" /></ImeIcon>,
  标点: <ImeIcon><circle cx="4" cy="5" r="1.500" strokeWidth="1.500" /><path d="M11 8.500c1.500 1 1 3-.5 4.500" strokeWidth="2.500" /></ImeIcon>,
  表情: <ImeIcon><circle cx="8" cy="8" r="7" strokeWidth="1.800" /><path d="M4.500 9.500c1.500 3 5.500 3 7 0" strokeWidth="1.500" /><path d="M5.700 4.500v2.500M10.300 4.500v2.500" strokeWidth="1.500" /></ImeIcon>,
  语音: <ImeIcon><rect x="5.500" y="1" width="5" height="8.500" rx="2.500" fill="#1c74c8" stroke="none" /><path d="M3 7c0 6 10 6 10 0M8 11.500V15M5 15h6" strokeWidth="1.500" /></ImeIcon>,
  键盘: <ImeIcon><path d="M.8 2.800h14.400v10.400H.8z" strokeWidth="1.600" /><path d="M3 5.500h10M3 8h10" strokeDasharray="1.500 1" /><path d="M5 11h6" strokeWidth="1.500" /></ImeIcon>,
  账户: <ImeIcon><g stroke="none" fill="#b4c0d8"><circle cx="6" cy="4" r="3" /><path d="M1 14c0-8 9-8 10 0z" /></g><path d="M5.500 8.500h9.700v6H5.500z" fill="#fff" stroke="#b4c0d8" strokeWidth="1.200" /><path d="M7.500 10.500h2v2h-2M11.500 10.500h2v2h-2z" stroke="#b4c0d8" strokeWidth="1" /></ImeIcon>,
  皮肤: <ImeIcon><path d="M5 2c1 2 5 2 6 0l4.500 2.500L14 8l-2-1v7.500H4V7L2 8L.5 4.500z" fill="#1c74c8" stroke="none" /></ImeIcon>,
  工具: <ImeIcon><path d="M1.500 1.500h6v6h-6zM1.500 9h6v6h-6zM9 9h6v6H9z" fill="#1c74c8" stroke="none" /><path d="M9.800 2.300h4.400v4.400H9.800z" strokeWidth="1.500" /></ImeIcon>,
};

export default function App() {
  return (
    <Page>
      <Global />
      <MenuStrip>
        <MenuGroup>
          <MenuItem href="#">系统</MenuItem>
          <MenuItem href="#">页面</MenuItem>
          <MenuItem href="#">板块</MenuItem>
          <MenuItem href="#">新闻</MenuItem>
          <MenuItem href="#" $color="#f01010">特色功能</MenuItem>
          <MenuItem href="#">扩展市场行情</MenuItem>
          <MenuItem href="#">工具</MenuItem>
          <MenuItem href="#">窗口</MenuItem>
          <MenuItem href="#">帮助</MenuItem>
        </MenuGroup>
        <MenuGroup><MenuItem href="#" $color="#f87030">博易云 智汇版</MenuItem></MenuGroup>
        <PillGroup><Pill>交易</Pill><Pill>资讯</Pill></PillGroup>
      </MenuStrip>
      <Toolbar>
        <ToolRow>
          {Object.entries(icons).map(([name, icon], i) => (
            <React.Fragment key={name}>
              {i === 11 && <Separator />}
              <Tool aria-label={name}>{icon}</Tool>
            </React.Fragment>
          ))}
          {tiles.map(([t, tone, size]) => (
            <Tool key={t} $on={t === '周'}><Tile $tone={tone} $size={size}>{t}</Tile></Tool>
          ))}
        </ToolRow>
      </Toolbar>
      <Brand href="#">
        <BrandMark />
        <BrandText>
          <BrandName>5e天资</BrandName>
          <BrandUrl>5etz.com</BrandUrl>
        </BrandText>
      </Brand>
      <Body>
        <Rail>
          {railTabs.map((t, i) => (
            <RailTab key={t} href="#" $on={i === 0}><RailText>{t}</RailText></RailTab>
          ))}
          <RailBadge>B</RailBadge>
        </Rail>
        <Charts>
          <ChartTitle>
            螺纹<Digits>1910 (010610)</Digits>&lt;周线&gt;
            <TitleLinks>
              <TitleLink href="#">商品叠加</TitleLink>
              <TitleLink href="#">周期</TitleLink>
              <svg width="52" height="15" fill="none" stroke="#80c0ff" shapeRendering="crispEdges">
                <path d="M1.500 1.500h15v12h-15zM18.500 1.500h15v12h-15zM50.500 1.500h-15v12h15M35.500 10.500h11M46.500 1.500v12M48 4.500h2M48 7.500h2M48 10.500h2" />
                <path d="M4 7.500l4-4v2.500h6v3H8v2.500zM31 7.500l-4-4v2.500h-6v3h6v2.500z" />
              </svg>
            </TitleLinks>
          </ChartTitle>
          <PricePane />
          <VolumePane />
          <MacdPane />
          <KdjPane />
          <QhlPane />
          <CciPane />
          <DateRow>
            <PeriodName>周线</PeriodName>
            <Drawing $h={14}>
              <g fill="#e0e0e0" fontFamily="Liberation Sans" fontWeight="400" fontSize="11">
                {DATES.map(([x, t]) => <text key={x} x={x} y="11">{t}</text>)}
              </g>
            </Drawing>
          </DateRow>
          <QuoteBox>
            <Dashes $lead $color={WHITE} />
            {quoteNames.map(([t, c]) => (
              <React.Fragment key={t}>
                <QuoteName>{[...t].map((ch) => <span key={ch}>{ch}</span>)}</QuoteName>
                <Dashes $color={c} />
              </React.Fragment>
            ))}
          </QuoteBox>
        </Charts>
        <Side>
          <Contract>螺纹1910(rb1910)</Contract>
          <Ratio>
            <RatioPart $part={106} $color={RED} />
            <RatioPart $part={134} $color={GREEN} />
          </Ratio>
          <Book rows={asks} />
          <Book rows={bids} />
          <Table $ruled>
            <tbody>
              {stats.map(([a, av, ac, b, bv, bc]) => (
                <Row key={a}>
                  <Cell $w={45} $pl={5}>{a}</Cell>
                  <Cell $w={68} $num $align="right" $color={ac}>{av}</Cell>
                  <Cell $w={53} $pl={13}>{b}</Cell>
                  <Cell $num $align="right" $pr={5} $color={bc}>{bv}</Cell>
                </Row>
              ))}
            </tbody>
          </Table>
          <Deals />
          <SideTabs>
            <SideTab>笔</SideTab>
            <SideRule />
          </SideTabs>
        </Side>
      </Body>
      <ImeBar>
        <ImeLogo width="29" height="28" viewBox="0 0 29 28">
          <rect x="2" y="2" width="24" height="24" rx="4" fill="#f04c14" transform="rotate(-10 14 14)" />
          <path d="M21 8c-5-2-12-1-12 2c0 4 11 2 11 6.500c0 4-8 4-13 2" fill="none" stroke="#fff" strokeWidth="4" />
        </ImeLogo>
        <ImeTools>
          {Object.entries(imeIcons).map(([name, icon]) => <ImeTool key={name} aria-label={name}>{icon}</ImeTool>)}
        </ImeTools>
      </ImeBar>
    </Page>
  );
}
